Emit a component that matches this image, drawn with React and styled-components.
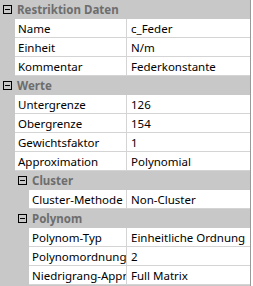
import React from 'react'
import styled, { createGlobalStyle } from 'styled-components'

const GlobalStyle = createGlobalStyle`
  body {
    margin: 0;
    background: #ffffff;
    font-family: 'Noto Sans', 'Open Sans', sans-serif;
  }
`

const Grid = styled.div`
  width: 250px;
  height: 286px;
  overflow: hidden;
  background: #c8c8c8;
  border-right: 1px solid #9a9a9a;
  font-size: 11.5px;
`

const Category = styled.div`
  display: flex;
  align-items: center;
  height: 19px;
  padding-left: ${(p) => 3 + (p.$level - 1) * 15}px;
  color: #6d6d6d;
  font-weight: 700;
`

const Toggle = styled.span`
  box-sizing: border-box;
  position: relative;
  width: 9px;
  height: 9px;
  border: 1px solid #000;
  margin-right: 5px;
  background: transparent;

  &::after {
    content: '';
    position: absolute;
    left: 1px;
    right: 1px;
    top: 3px;
    height: 1px;
    background: #000;
  }
`

const Row = styled.div`
  display: grid;
  grid-template-columns: ${(p) => 127 - (14 * p.$level + 1)}px 1fr;
  margin-left: ${(p) => 14 * p.$level + 1}px;
  height: 19px;
  background: #ffffff;
  border-bottom: 1px solid #d4d4d4;
  box-sizing: border-box;
`

const Cell = styled.div`
  display: flex;
  align-items: center;
  padding-left: ${(p) => (p.$value ? 4 : 3)}px;
  color: #000;
  white-space: nowrap;
  overflow: hidden;
  border-right: ${(p) => (p.$value ? 'none' : '1px solid #d4d4d4')};
`

const sections = [
  {
    title: 'Restriktion Daten',
    level: 1,
    rows: [
      ['Name', 'c_Feder'],
      ['Einheit', 'N/m'],
      ['Kommentar', 'Federkonstante'],
    ],
  },
  {
    title: 'Werte',
    level: 1,
    rows: [
      ['Untergrenze', '126'],
      ['Obergrenze', '154'],
      ['Gewichtsfaktor', '1'],
      ['Approximation', 'Polynomial'],
    ],
  },
  {
    title: 'Cluster',
    level: 2,
    rows: [['Cluster-Methode', 'Non-Cluster']],
  },
  {
    title: 'Polynom',
    level: 2,
    rows: [
      ['Polynom-Typ', 'Einheitliche Ordnung'],
      ['Polynomordnung', '2'],
      ['Niedrigrang-Approximation', 'Full Matrix'],
    ],
  },
]

const App = () => (
  <>
    <GlobalStyle />
    <Grid>
      {sections.map((s) => (
        <React.Fragment key={s.title}>
          <Category $level={s.level}>
            <Toggle />
            {s.title}
          </Category>
          {s.rows.map(([name, value]) => (
            <Row key={name} $level={s.level}>
              <Cell>{name}</Cell>
              <Cell $value>{value}</Cell>
            </Row>
          ))}
        </React.Fragment>
      ))}
    </Grid>
  </>
)

export default App
